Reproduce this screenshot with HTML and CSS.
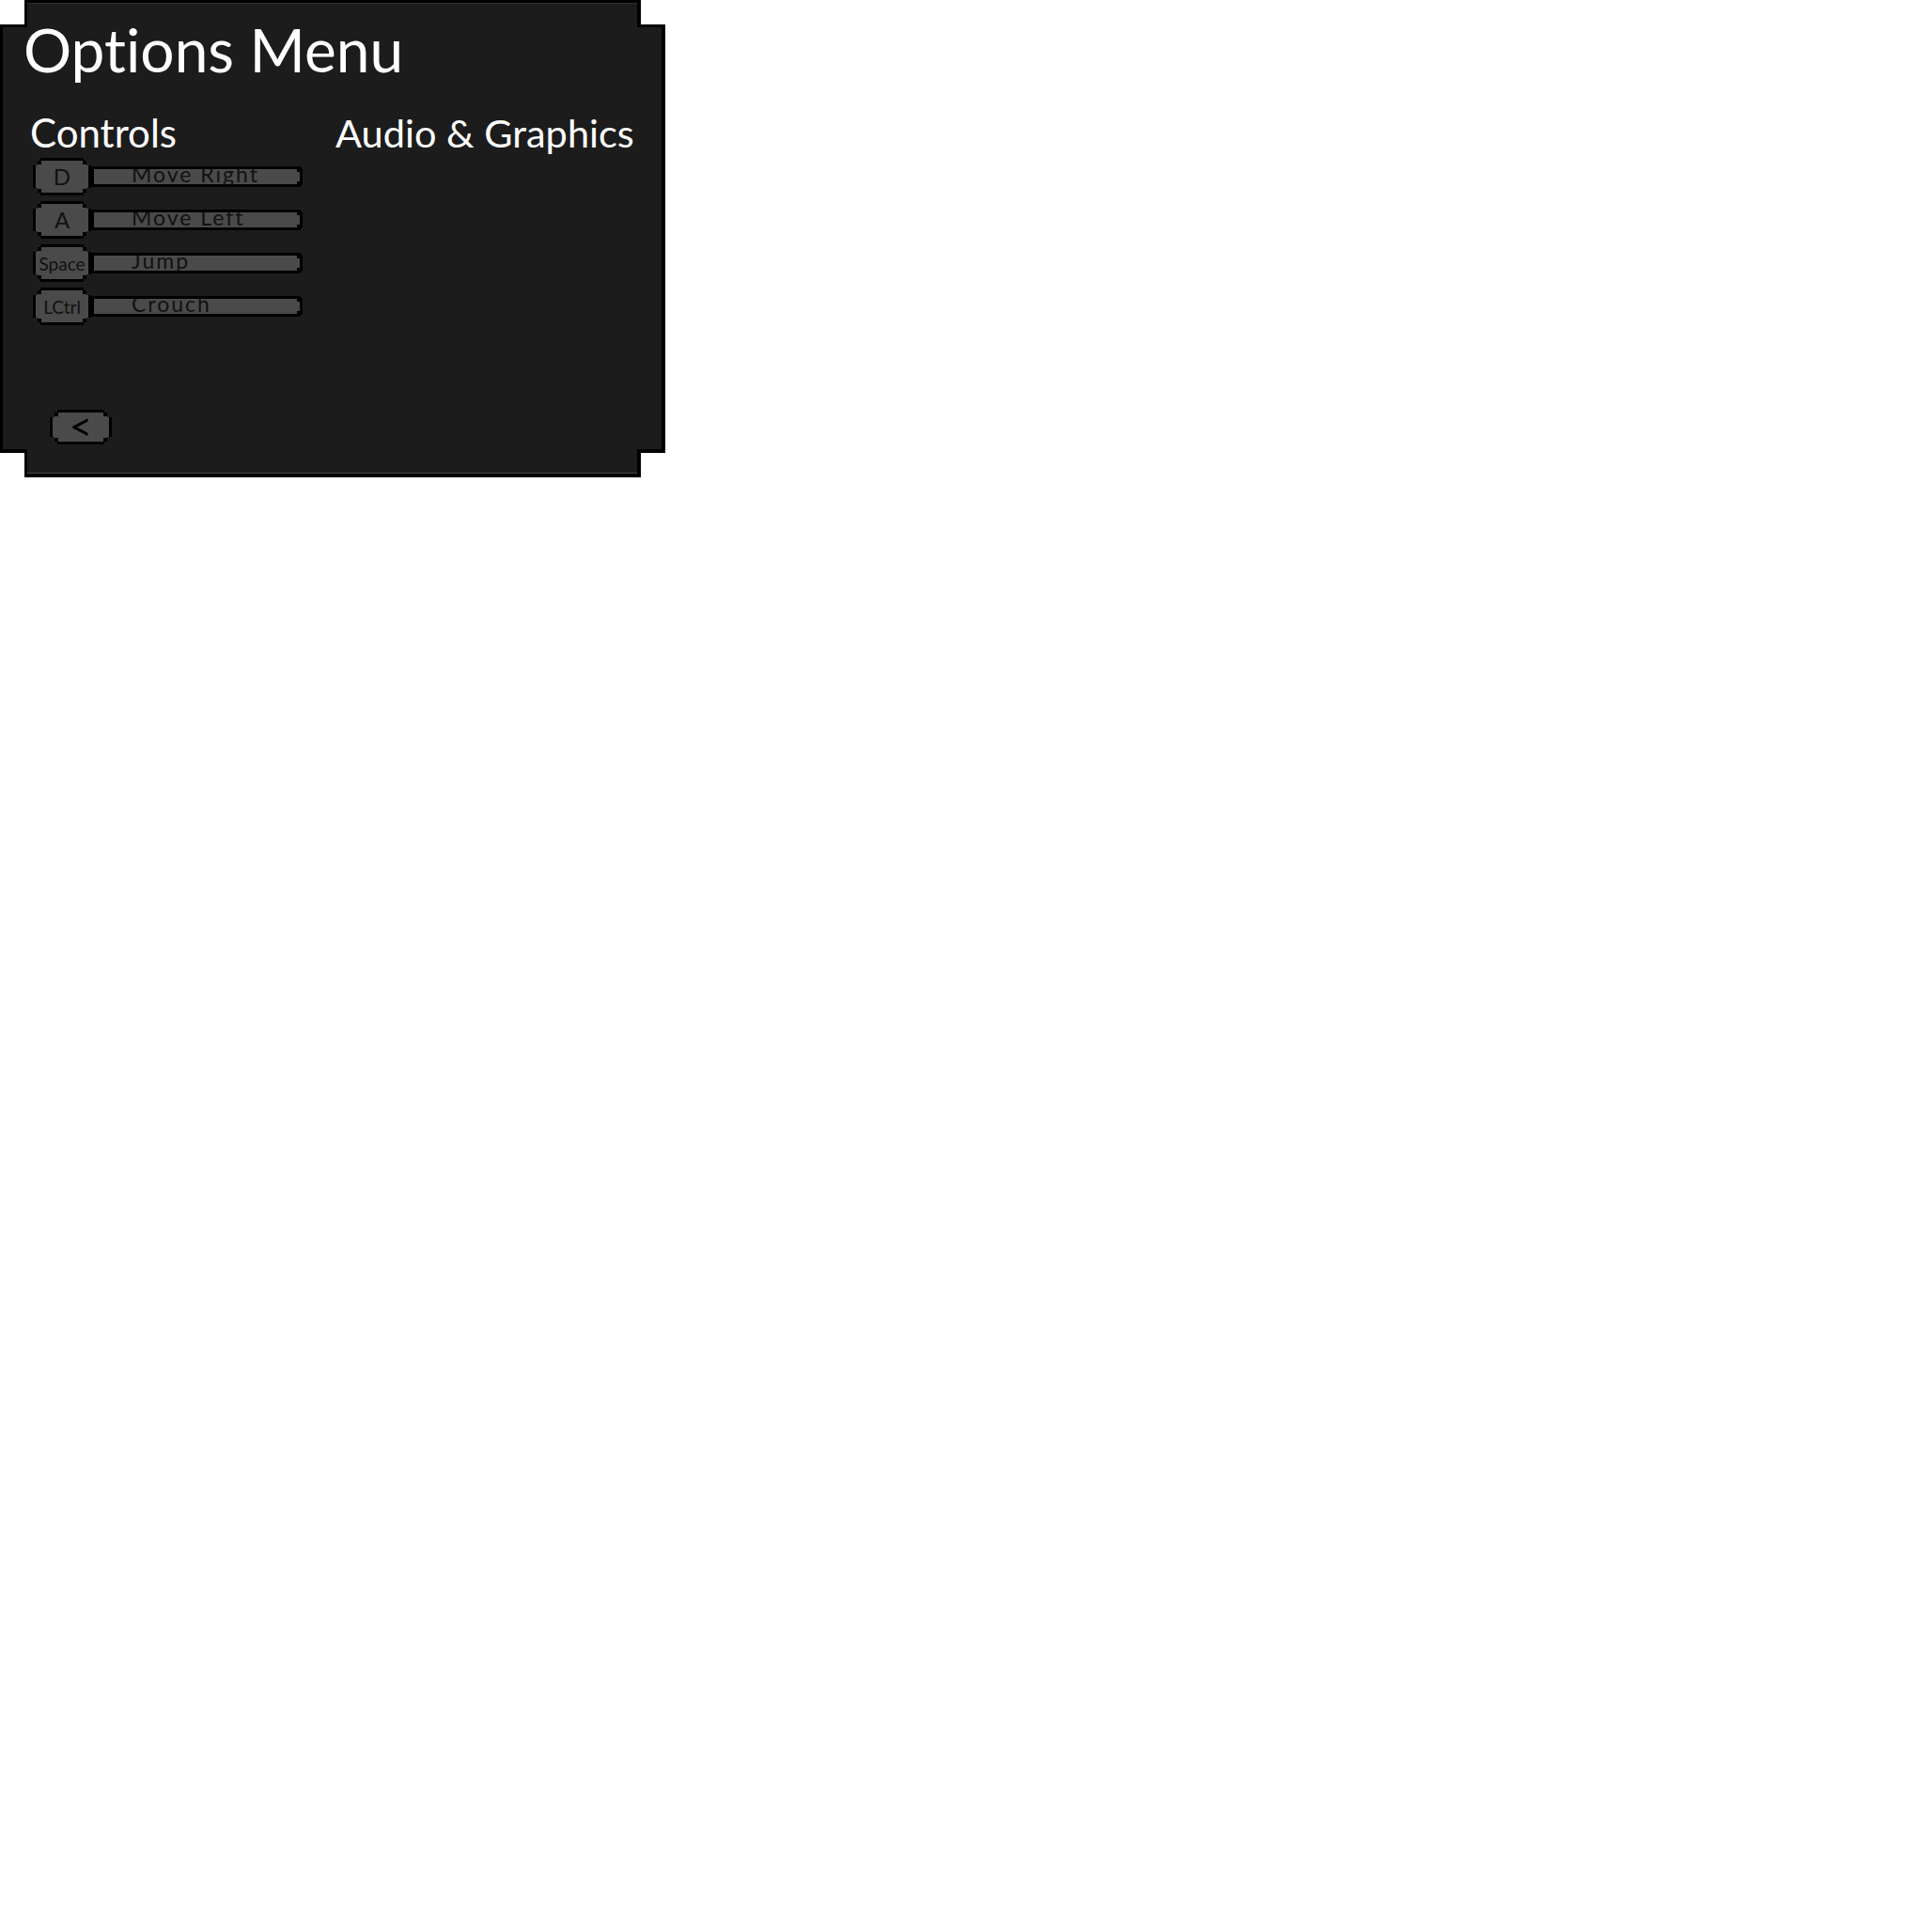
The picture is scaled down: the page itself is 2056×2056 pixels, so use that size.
FILE: index.html
```html
<!DOCTYPE html>
<html lang="en">
<head>
<meta charset="utf-8">
<title>Options Menu</title>
<link rel="stylesheet" href="styles.css">
</head>
<body>
<div class="panel">
  <div class="panel-body">
    <h1 class="title">Options Menu</h1>
    <div class="columns">
      <section class="col">
        <h2 class="heading">Controls</h2>
        <ul class="binds">
          <li class="bind">
            <span class="key"><span class="key-face">D</span></span>
            <span class="action"><span class="action-face">Move Right</span></span>
          </li>
          <li class="bind">
            <span class="key"><span class="key-face">A</span></span>
            <span class="action"><span class="action-face">Move Left</span></span>
          </li>
          <li class="bind">
            <span class="key"><span class="key-face key-small">Space</span></span>
            <span class="action"><span class="action-face">Jump</span></span>
          </li>
          <li class="bind">
            <span class="key"><span class="key-face key-small">LCtrl</span></span>
            <span class="action"><span class="action-face">Crouch</span></span>
          </li>
        </ul>
      </section>
      <section class="col">
        <h2 class="heading heading-wide">Audio &amp; Graphics</h2>
      </section>
    </div>
    <div class="footer">
      <button class="back" type="button"><span class="back-face">&lt;</span></button>
    </div>
  </div>
</div>
</body>
</html>
```
FILE: styles.css
```css
html, body {
  margin: 0;
  padding: 0;
  background: #ffffff;
}

body {
  font-family: Lato, "Open Sans", sans-serif;
  font-variant-ligatures: none;
  font-feature-settings: "liga" 0, "clig" 0;
}

.panel {
  width: 708px;
  height: 508px;
  box-sizing: border-box;
  padding: 3px 4px 4px 3px;
  background: #000;
  clip-path: polygon(26px 0, calc(100% - 26px) 0, calc(100% - 26px) 26px, 100% 26px,
    100% calc(100% - 26px), calc(100% - 26px) calc(100% - 26px), calc(100% - 26px) 100%,
    26px 100%, 26px calc(100% - 26px), 0 calc(100% - 26px), 0 26px, 26px 26px);
}

.panel-body {
  height: 100%;
  box-sizing: border-box;
  background: #1c1c1c;
  box-shadow: inset 0 1px 0 #303030, inset 0 -1px 0 #4a4a4a;
  clip-path: polygon(26px 0, calc(100% - 26px) 0, calc(100% - 26px) 26px, 100% 26px,
    100% calc(100% - 26px), calc(100% - 26px) calc(100% - 26px), calc(100% - 26px) 100%,
    26px 100%, 26px calc(100% - 26px), 0 calc(100% - 26px), 0 26px, 26px 26px);
  display: flex;
  flex-direction: column;
  padding: 18px 0 31px 0;
}

.title {
  margin: 0 0 0 22px;
  font-size: 64px;
  line-height: 64px;
  font-weight: 400;
  color: #fff;
}

.columns {
  display: grid;
  grid-template-columns: 325px 1fr;
  margin-top: 35px;
  padding-left: 29px;
}

.heading {
  margin: 0;
  font-size: 42px;
  line-height: 42px;
  font-weight: 400;
  color: #fff;
}

.heading-wide {
  font-size: 41.5px;
}

.binds {
  list-style: none;
  margin: 6px 0 0 0;
  padding: 0 0 0 3px;
  display: flex;
  flex-direction: column;
  gap: 6px;
}

.bind {
  display: flex;
  align-items: center;
}

.key {
  display: block;
  width: 62px;
  height: 40px;
  box-sizing: border-box;
  padding: 3px;
  background: #000;
  clip-path: polygon(8px 0, calc(100% - 8px) 0, calc(100% - 8px) 3px, calc(100% - 5px) 3px,
    calc(100% - 5px) 8px, 100% 8px, 100% calc(100% - 8px), calc(100% - 5px) calc(100% - 8px),
    calc(100% - 5px) calc(100% - 3px), calc(100% - 8px) calc(100% - 3px), calc(100% - 8px) 100%,
    8px 100%, 8px calc(100% - 3px), 5px calc(100% - 3px), 5px calc(100% - 8px), 0 calc(100% - 8px),
    0 8px, 5px 8px, 5px 3px, 8px 3px);
}

.key-face {
  display: flex;
  align-items: center;
  justify-content: center;
  height: 100%;
  background: #4a4a4a;
  color: #111;
  font-size: 24px;
  line-height: 1;
  clip-path: polygon(6px 0, calc(100% - 6px) 0, calc(100% - 6px) 4px, 100% 4px,
    100% calc(100% - 4px), calc(100% - 6px) calc(100% - 4px), calc(100% - 6px) 100%,
    6px 100%, 6px calc(100% - 4px), 0 calc(100% - 4px), 0 4px, 6px 4px);
}

.key-small {
  font-size: 19px;
  letter-spacing: 0;
}

.action {
  display: block;
  width: 225px;
  height: 22px;
  box-sizing: border-box;
  padding: 3px;
  background: #000;
  clip-path: polygon(0 0, calc(100% - 3px) 0, 100% 3px, 100% calc(100% - 3px),
    calc(100% - 3px) 100%, 0 100%);
}

.action-face {
  display: block;
  height: 100%;
  box-sizing: border-box;
  padding-left: 40px;
  background: #4a4a4a;
  color: #111;
  font-size: 23px;
  line-height: 10px;
  letter-spacing: 2px;
  white-space: nowrap;
  clip-path: polygon(0 0, calc(100% - 3px) 0, calc(100% - 3px) 3px, 100% 3px,
    100% calc(100% - 3px), calc(100% - 3px) calc(100% - 3px), calc(100% - 3px) 100%, 0 100%);
}

.footer {
  margin-top: auto;
  padding-left: 50px;
}

.back {
  display: block;
  width: 66px;
  height: 37px;
  box-sizing: border-box;
  margin: 0;
  padding: 3px;
  border: 0;
  background: #000;
  font-family: inherit;
  clip-path: polygon(8px 0, calc(100% - 8px) 0, calc(100% - 8px) 3px, calc(100% - 5px) 3px,
    calc(100% - 5px) 8px, 100% 8px, 100% calc(100% - 8px), calc(100% - 5px) calc(100% - 8px),
    calc(100% - 5px) calc(100% - 3px), calc(100% - 8px) calc(100% - 3px), calc(100% - 8px) 100%,
    8px 100%, 8px calc(100% - 3px), 5px calc(100% - 3px), 5px calc(100% - 8px), 0 calc(100% - 8px),
    0 8px, 5px 8px, 5px 3px, 8px 3px);
}

.back-face {
  display: flex;
  align-items: center;
  justify-content: center;
  height: 100%;
  background: #4a4a4a;
  color: #000;
  font-size: 42px;
  line-height: 1;
  padding-bottom: 3px;
  box-sizing: border-box;
  clip-path: polygon(6px 0, calc(100% - 6px) 0, calc(100% - 6px) 4px, 100% 4px,
    100% calc(100% - 4px), calc(100% - 6px) calc(100% - 4px), calc(100% - 6px) 100%,
    6px 100%, 6px calc(100% - 4px), 0 calc(100% - 4px), 0 4px, 6px 4px);
}
```
